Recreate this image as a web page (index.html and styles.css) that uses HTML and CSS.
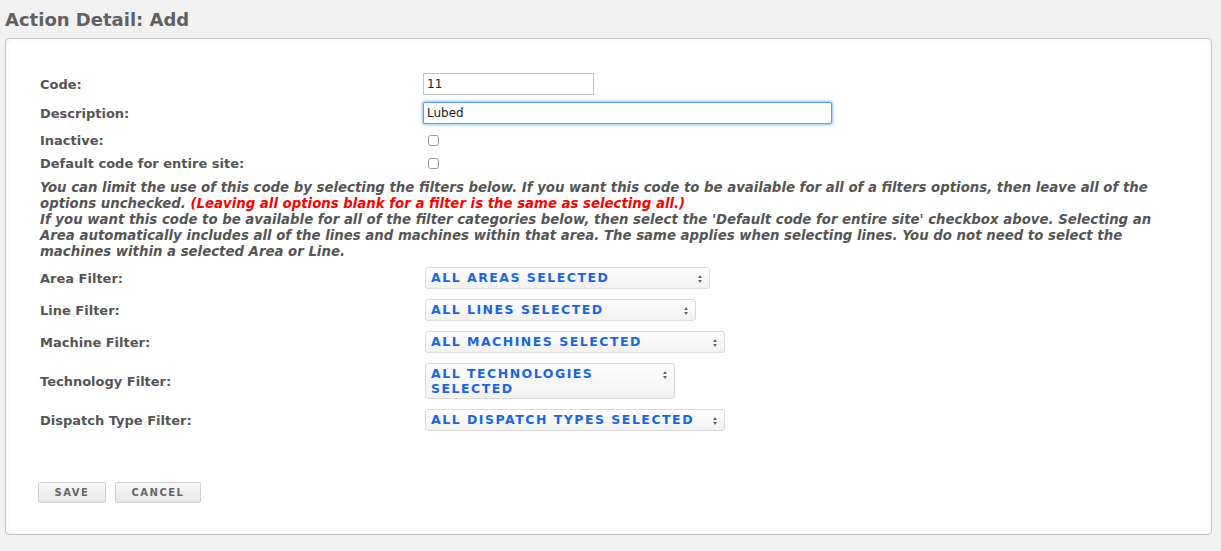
FILE: index.html
```html
<!DOCTYPE html>
<html lang="en">
<head>
  <meta charset="UTF-8" />
  <title>Action Detail: Add</title>
  <link rel="stylesheet" href="styles.css">
</head>
<body>
  <h1 class="page-title">Action Detail: Add</h1>

  <div class="panel">
    <form id="actionForm">
      <div class="row row-code">
        <label for="code">Code:</label>
        <input type="text" id="code" class="text-input code-input" value="11">
      </div>
      <div class="row row-desc">
        <label for="description">Description:</label>
        <input type="text" id="description" class="text-input desc-input focused" value="Lubed">
      </div>
      <div class="row row-check">
        <label for="inactive">Inactive:</label>
        <input type="checkbox" id="inactive" class="check">
      </div>
      <div class="row row-check">
        <label for="default_site">Default code for entire site:</label>
        <input type="checkbox" id="default_site" class="check">
      </div>

      <p class="note">
        You can limit the use of this code by selecting the filters below. If you want this code to be available for all of a filters options, then leave all of the options unchecked. <span class="warn">(Leaving all options blank for a filter is the same as selecting all.)</span><br>
        If you want this code to be available for all of the filter categories below, then select the 'Default code for entire site' checkbox above. Selecting an Area automatically includes all of the lines and machines within that area. The same applies when selecting lines. You do not need to select the machines within a selected Area or Line.
      </p>

      <div class="filters">
        <div class="row row-filter">
          <label>Area Filter:</label>
          <button type="button" class="multi w-area"><span>All Areas Selected</span><i class="caret"></i></button>
        </div>
        <div class="row row-filter">
          <label>Line Filter:</label>
          <button type="button" class="multi w-line"><span>All Lines Selected</span><i class="caret"></i></button>
        </div>
        <div class="row row-filter">
          <label>Machine Filter:</label>
          <button type="button" class="multi w-machine"><span>All Machines Selected</span><i class="caret"></i></button>
        </div>
        <div class="row row-filter">
          <label>Technology Filter:</label>
          <button type="button" class="multi w-tech"><span>All Technologies Selected</span><i class="caret"></i></button>
        </div>
        <div class="row row-filter">
          <label>Dispatch Type Filter:</label>
          <button type="button" class="multi w-dispatch"><span>All Dispatch Types Selected</span><i class="caret"></i></button>
        </div>
      </div>

      <div class="actions">
        <button type="submit" class="btn btn-save">Save</button>
        <button type="button" class="btn btn-cancel">Cancel</button>
      </div>
    </form>
  </div>
</body>
</html>
```

FILE: styles.css
```css
body {
  margin: 0;
  background: #f1f1f1;
  font-family: "DejaVu Sans", Verdana, sans-serif;
  color: #555;
}

.page-title {
  margin: 0;
  padding: 9px 5px 0 5px;
  height: 29px;
  font-size: 18px;
  font-weight: bold;
  color: #616161;
}

.panel {
  margin: 0 9px 0 5px;
  height: 497px;
  box-sizing: border-box;
  background: #fff;
  border: 1px solid #c6c6c6;
  border-radius: 4px;
  box-shadow: inset 0 0 6px rgba(0, 0, 0, 0.06);
  padding: 34px 30px 0 34px;
}

.row {
  display: grid;
  grid-template-columns: 384px 1fr;
  align-items: center;
}

.row label {
  font-size: 13px;
  font-weight: bold;
  color: #555;
}

.row-code {
  height: 22px;
  margin-bottom: 7px;
}

.row-desc {
  height: 22px;
  margin-bottom: 5px;
}

.row-check {
  height: 23px;
}

.text-input {
  height: 22px;
  box-sizing: border-box;
  border: 1px solid #c4c4c4;
  padding: 1px 3px;
  font-family: "DejaVu Sans", Verdana, sans-serif;
  font-size: 12px;
  color: #222;
  outline: none;
}

.code-input {
  width: 171px;
  margin-left: -1px;
}

.desc-input {
  width: 409px;
  margin-left: -1px;
}

.focused {
  border: 1px solid #5a9ee6;
  box-shadow: 0 0 3px 1px #8cc0f4;
  border-radius: 2px;
}

.check {
  appearance: none;
  -webkit-appearance: none;
  margin: 0 0 0 4px;
  width: 11px;
  height: 11px;
  border: 1px solid #9a9a9a;
  border-radius: 3px;
  background: #fff;
}

.note {
  margin: 5px 0 0 0;
  font-size: 13.3px;
  line-height: 16px;
  font-weight: bold;
  font-style: italic;
  color: #555;
  max-width: 1145px;
}

.warn {
  color: #f00;
}

.filters {
  margin-top: 7px;
  display: flex;
  flex-direction: column;
  gap: 10px;
}

.multi {
  position: relative;
  display: flex;
  align-items: center;
  box-sizing: border-box;
  min-height: 22px;
  margin-left: 1px;
  padding: 1px 20px 1px 5px;
  border: 1px solid #dadada;
  border-radius: 3px;
  background: linear-gradient(#fdfdfd, #f1f1f1);
  text-align: left;
  cursor: pointer;
}

.multi span {
  font-family: "DejaVu Sans", Verdana, sans-serif;
  font-size: 12.5px;
  font-weight: bold;
  line-height: 16px;
  letter-spacing: 1.5px;
  text-transform: uppercase;
  color: #1766e6;
}

.caret {
  position: absolute;
  right: 6px;
  top: 7px;
  width: 5px;
  height: 8px;
}

.caret::before,
.caret::after {
  content: "";
  position: absolute;
  left: 0;
  border-left: 2.5px solid transparent;
  border-right: 2.5px solid transparent;
}

.caret::before {
  top: 0;
  border-bottom: 3px solid #666;
}

.caret::after {
  bottom: 0;
  border-top: 3px solid #666;
}

.w-area { width: 285px; }
.w-line { width: 271px; }
.w-machine { width: 300px; }
.w-tech { width: 250px; height: 36px; align-items: flex-start; padding-top: 2px; padding-bottom: 1px; }
.w-tech span { line-height: 15px; }
.w-tech .caret { top: 7px; }
.w-dispatch { width: 300px; }

.actions {
  margin-top: 51px;
  margin-left: -2px;
  display: flex;
  gap: 9px;
}

.btn {
  height: 21px;
  box-sizing: border-box;
  border: 1px solid #cfcfcf;
  border-radius: 2px;
  background: linear-gradient(#f8f8f8, #e6e6e6);
  font-family: "DejaVu Sans", Verdana, sans-serif;
  font-size: 10px;
  font-weight: bold;
  letter-spacing: 1.5px;
  text-transform: uppercase;
  color: #666;
  cursor: pointer;
}

.btn-save { width: 68px; }
.btn-cancel { width: 86px; }
```
